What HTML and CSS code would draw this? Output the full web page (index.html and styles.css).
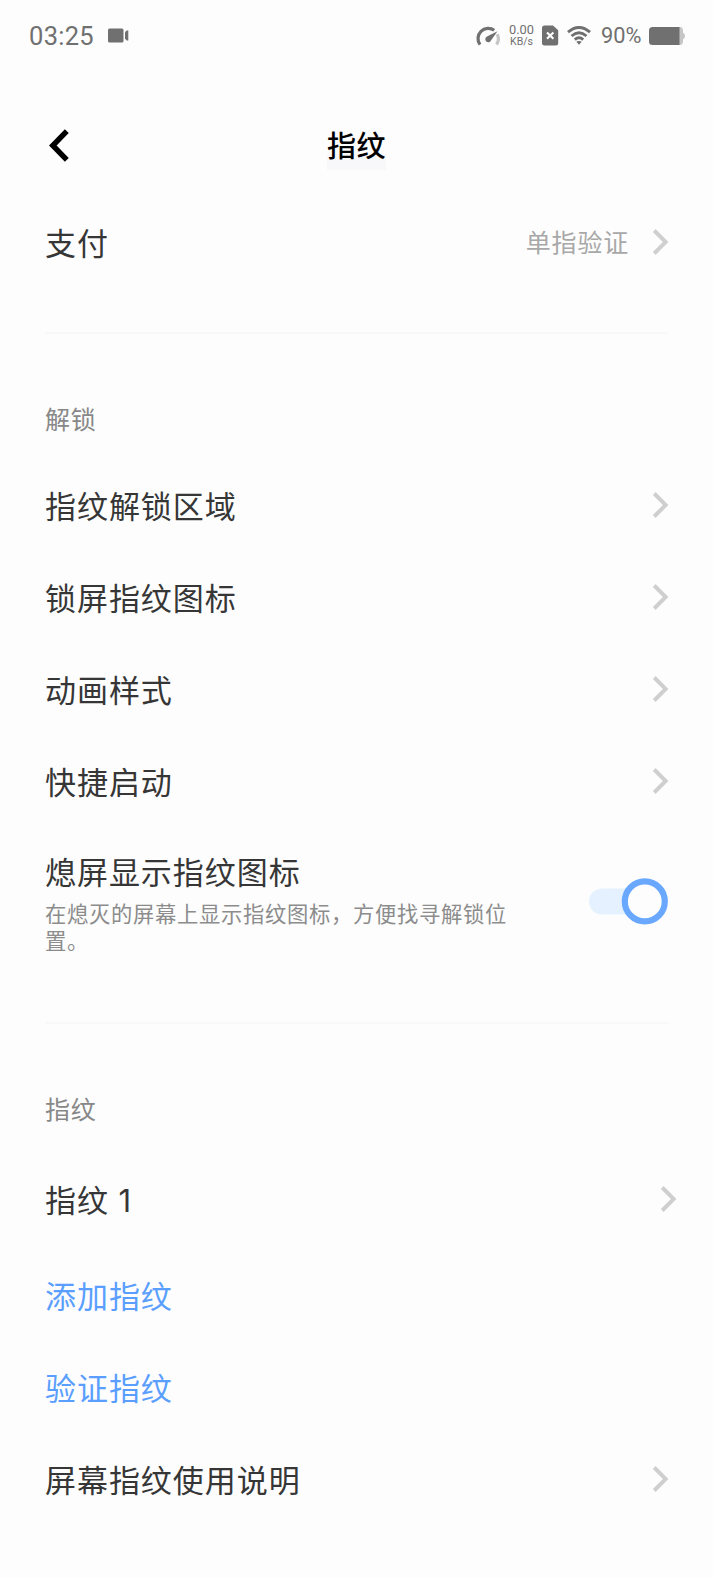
FILE: index.html
```html
<!DOCTYPE html>
<html lang="zh-CN">
<head>
<meta charset="utf-8">
<title>指纹</title>
<link rel="stylesheet" href="styles.css">
</head>
<body>
<div class="screen">
  <div class="status">
    <span class="clock">03:25</span>
    <svg class="cam" width="21" height="15" viewBox="0 0 21 15"><rect x="0" y="0.5" width="15.5" height="14" rx="1.5"/><path d="M17 4.2L18.6 2.4H20.3V12.4H18.6L17 10.6Z"/></svg>
    <svg class="gauge" width="25" height="21" viewBox="0 0 25 21"><path class="arc" d="M4 18.6A10.2 10.2 0 0 1 18.2 4.3"/><path class="arc light" d="M21.2 8.3A10.2 10.2 0 0 1 20.6 18.6"/><path d="M21.5 5.2L15.1 14.2A3 3 0 1 1 11 10.5Z"/></svg>
    <span class="speed"><span class="rate">0.00</span><span class="unit">KB/s</span></span>
    <svg class="sim" width="17" height="21" viewBox="0 0 17 21"><path d="M2.5 0.5H11L16.2 5.2V18Q16.2 20.5 13.7 20.5H2.5Q0 20.5 0 18V3Q0 0.5 2.5 0.5Z"/><path class="cross" d="M5 7.4L11.4 13.8M11.4 7.4L5 13.8"/></svg>
    <svg class="wifi" width="24" height="19" viewBox="0 0 24 19"><path class="wave" d="M1 6.2Q12 -3.2 23 6.2M4.5 10Q12 3.6 19.5 10M7.8 13.6Q12 9.9 16.2 13.6"/><path d="M9.3 15.8Q12 14 14.7 15.8L12 18.8Z"/></svg>
    <span class="percent">90%</span>
    <svg class="battery" width="36" height="18" viewBox="0 0 36 18"><path class="cap" d="M29 0H31Q34 0 34 4V5.5Q36 6.5 36 9Q36 11.5 34 12.5V14Q34 18 31 18H29Z"/><path d="M3.5 0H30.5V18H3.5Q0 18 0 14.5V3.5Q0 0 3.5 0Z"/></svg>
  </div>
  <div class="header">
    <svg class="back" width="20" height="33" viewBox="0 0 20 33"><path d="M17.8 2.2L3.8 16.5L17.8 30.8"/></svg>
    <h1 class="title">指纹</h1>
  </div>
  <div class="row"><span class="name">支付</span><span class="value">单指验证</span><svg class="chevron" width="17" height="28" viewBox="0 0 17 28"><path d="M2.2 2.5L13.7 14L2.2 25.5"/></svg></div>
  <div class="divider"></div>
  <div class="label">解锁</div>
  <div class="row"><span class="name">指纹解锁区域</span><svg class="chevron" width="17" height="28" viewBox="0 0 17 28"><path d="M2.2 2.5L13.7 14L2.2 25.5"/></svg></div>
  <div class="row"><span class="name">锁屏指纹图标</span><svg class="chevron" width="17" height="28" viewBox="0 0 17 28"><path d="M2.2 2.5L13.7 14L2.2 25.5"/></svg></div>
  <div class="row"><span class="name">动画样式</span><svg class="chevron" width="17" height="28" viewBox="0 0 17 28"><path d="M2.2 2.5L13.7 14L2.2 25.5"/></svg></div>
  <div class="row"><span class="name">快捷启动</span><svg class="chevron" width="17" height="28" viewBox="0 0 17 28"><path d="M2.2 2.5L13.7 14L2.2 25.5"/></svg></div>
  <div class="row detail">
    <div class="texts"><div class="name">熄屏显示指纹图标</div><div class="desc">在熄灭的屏幕上显示指纹图标，方便找寻解锁位置。</div></div>
    <svg class="toggle" width="79" height="47" viewBox="0 0 79 47"><rect class="track" x="0" y="10.5" width="60" height="26" rx="13"/><circle class="knob" cx="55.8" cy="23.4" r="20"/></svg>
  </div>
  <div class="divider"></div>
  <div class="label">指纹</div>
  <div class="row finger"><span class="name">指纹 1</span><svg class="chevron" width="17" height="28" viewBox="0 0 17 28"><path d="M2.2 2.5L13.7 14L2.2 25.5"/></svg></div>
  <div class="row"><span class="name action">添加指纹</span></div>
  <div class="row"><span class="name action">验证指纹</span></div>
  <div class="row"><span class="name">屏幕指纹使用说明</span><svg class="chevron" width="17" height="28" viewBox="0 0 17 28"><path d="M2.2 2.5L13.7 14L2.2 25.5"/></svg></div>
</div>
</body>
</html>
```
FILE: styles.css
```css
* { box-sizing: border-box; }
body { margin: 0; background: #fdfdfd; font-family: Inter, "Noto Sans CJK SC", sans-serif; }
.screen { width: 713px; height: 1577px; overflow: hidden; }
svg { display: block; flex: none; }
.status { display: flex; align-items: center; height: 72px; padding-left: 29px; color: #707070; fill: #707070; }
.clock { width: 79px; font: 25.5px/30px Roboto, sans-serif; letter-spacing: 0.3px; }
.cam { margin-bottom: 2px; }
.gauge { margin-left: 347px; }
.arc { fill: none; stroke: #707070; stroke-width: 3.2; }
.light { stroke: #c6c6c6; }
.speed { display: flex; flex-direction: column; align-items: center; width: 33px; margin-left: 4px; padding-bottom: 1px; font-family: Roboto, sans-serif; font-size: 12.8px; line-height: 11px; }
.unit { margin-top: 1px; font-size: 10.5px; }
.sim { margin: 0 0 2px 4px; }
.wifi { margin: 0 0 1px 8px; }
.cross { fill: none; stroke: #fff; stroke-width: 2.1; }
.wave { fill: none; stroke: #707070; stroke-width: 2.9; }
.percent { width: 48px; margin-left: 10px; font: 21.8px/26px Roboto, sans-serif; }
.cap { fill: #c6c6c6; }
.header { display: flex; align-items: center; height: 124px; padding: 24px 49px 0; }
.back { margin-top: -2px; }
.back path { fill: none; stroke: #000; stroke-width: 5.4; }
.title { width: 59px; height: 48px; margin: 0 0 0 258px; background: linear-gradient(transparent 32px, #f8f8fa 32px); color: #000; font-size: 29px; font-weight: 500; line-height: 50px; white-space: nowrap; letter-spacing: 0.5px; }
.row { display: flex; align-items: center; height: 92px; padding: 0 44px 0 45px; }
.name { flex: 1; padding-top: 3px; color: #363636; font-size: 31px; line-height: 43px; letter-spacing: 0.95px; }
.value { margin-right: 23px; padding-bottom: 2px; color: #a8a8a8; font-size: 25px; letter-spacing: 0.8px; }
.chevron { margin-bottom: 1px; }
.chevron path { fill: none; stroke: #cfcfcf; stroke-width: 3.9; }
.divider { height: 2px; margin: 44px 45px 0; background: #f8f8f8; }
.label { height: 125px; padding: 67px 45px 0; color: #888; font-size: 25px; line-height: 38px; letter-spacing: 0.8px; }
.detail { height: 151px; align-items: flex-start; padding-right: 45px; }
.texts { flex: 1; padding-top: 21px; }
.desc { width: 468px; margin-top: 7px; color: #8c8c8c; font-size: 21.3px; line-height: 26.5px; letter-spacing: 0.7px; }
.toggle { margin-top: 51px; }
.track { fill: #e6f1ff; }
.knob { fill: #fdfdfd; stroke: #6aa8ff; stroke-width: 6.2; }
.finger { height: 100px; padding-right: 36px; }
.action { color: #5a9fff; }
```
